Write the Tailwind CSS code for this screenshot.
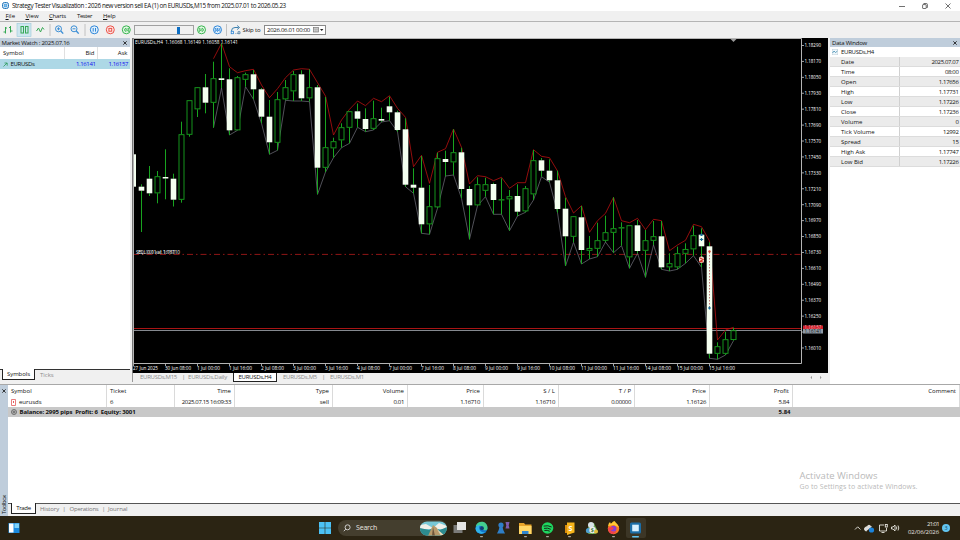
<!DOCTYPE html>
<html lang="en">
<head>
    <meta charset="UTF-8">
    <meta name="viewport" content="width=device-width, initial-scale=1.0">
    <title>Strategy Tester Visualization</title>
    <script src="https://cdn.jsdelivr.net/npm/@tailwindcss/browser@4"></script>
</head>
<body class="w-[960px] h-[540px] overflow-hidden flex flex-col bg-[#f0f0f0] font-['Open_Sans','Noto_Sans',sans-serif] text-[6px] leading-[10px] text-[#111] whitespace-nowrap">

    <!-- Title bar -->
    <header class="h-[11px] shrink-0 bg-white flex items-center pl-[2px]">
        <svg class="size-[7px] mr-[3px]" viewBox="0 0 14 14"><rect x="1" y="1" width="12" height="12" rx="4" fill="#fff" stroke="#1f74b8" stroke-width="2"/><rect x="4" y="4" width="6" height="6" fill="#7ec3f5" stroke="#2c80c4"/></svg>
        <span class="text-[6.3px]" data-size="6.3" data-w="274">Strategy Tester Visualization : 2026 new version sell EA (1) on EURUSDs,M15 from 2025.07.01 to 2026.05.23</span>
        <div class="ml-auto flex items-center gap-[17px] pr-[9px] text-[#333]">
            <svg class="size-[6px]" viewBox="0 0 6 6"><path d="M0 3.5h6" stroke="currentColor" stroke-width=".7"/></svg>
            <svg class="size-[6px]" viewBox="0 0 6 6" fill="none" stroke="currentColor" stroke-width=".7"><rect x=".6" y="1.6" width="3.6" height="3.9" rx=".5"/><path d="M1.8 1.4V.5h2.6q1 0 1 1v3H4.5"/></svg>
            <svg class="size-[6px]" viewBox="0 0 6 6"><path d="M.5.5l5 5m0-5l-5 5" stroke="currentColor" stroke-width=".7"/></svg>
        </div>
    </header>

    <!-- Menu -->
    <nav class="h-[11px] shrink-0 border-b border-[#b4b4b4] flex items-center">
        <span class="w-[20px] ml-[5.5px]"><u>F</u>ile</span>
        <span class="w-[23.5px]"><u>V</u>iew</span>
        <span class="w-[28px]" data-w="17"><u>C</u>harts</span>
        <span class="w-[26px]" data-w="15">Tester</span>
        <span data-w="12.5"><u>H</u>elp</span>
    </nav>

    <!-- Toolbar -->
    <div class="h-[16px] shrink-0 flex items-center">
        <svg class="w-[134px] h-[16px]" viewBox="0 22 134 16" fill="none" stroke-width="1">
            <g stroke="#35a853"><path d="M5.500 27v6.500M3.500 32h2M5.500 28h1.500M10.500 26v6.500M9 27.500h1.500M10.500 31h2"/></g>
            <rect x="17" y="23.500" width="14" height="13" fill="#cde6ee" stroke="#9cc9da" stroke-width=".6"/>
            <g stroke="#35a853"><rect x="21" y="26.500" width="2.500" height="6.500"/><rect x="25.500" y="26.500" width="2.500" height="6.500"/><path d="M36.500 31l2-3 2 4 2-4.500 1.500 2"/></g>
            <path d="M50 24v12M85 24v12" stroke="#b5b5b5" stroke-width=".8"/>
            <g stroke="#3b8fd6"><circle cx="58.500" cy="28.800" r="3"/><path d="M57 28.800h3M58.500 27.300v3"/><path d="M60.800 31l2.400 2.600" stroke-width="1.400"/><circle cx="74" cy="28.800" r="3"/><path d="M72.500 28.800h3"/><path d="M76.300 31l2.400 2.600" stroke-width="1.400"/></g>
            <g stroke="#2f86d8"><circle cx="94.300" cy="29.800" r="4" fill="#e0f0fc"/><path d="M93.200 28v3.600M95.500 28v3.600"/></g>
            <g stroke="#ec5248"><circle cx="110.300" cy="29.800" r="4" fill="#fde7e5"/><rect x="108.900" y="28.400" width="2.800" height="2.800"/></g>
            <g stroke="#38b54f"><circle cx="126.300" cy="29.800" r="4" fill="#e2f7e4"/><path d="M126 28l-2 1.800 2 1.800zM128.600 28l-2 1.800 2 1.800z" stroke-width=".8"/></g>
        </svg>
        <div class="w-[60px] h-[10px] border border-[#a0a0a0] pl-[42px] flex items-center"><span class="w-[3px] h-[7px] bg-[#0c6ec4]"></span></div>
        <svg class="w-[47px] h-[16px]" viewBox="194 22 47 16" fill="none">
            <g stroke="#38b54f"><circle cx="201.500" cy="29.800" r="4" fill="#e2f7e4"/><path d="M199.300 28l2 1.800-2 1.800zM202 28l2 1.800-2 1.800z" stroke-width=".8"/></g>
            <g stroke="#2f86d8"><circle cx="217.500" cy="29.800" r="4" fill="#e0f0fc"/><path d="M215.300 28l1.800 1.800-1.800 1.800zM217.400 28l1.800 1.800-1.800 1.800zM219.800 28v3.600" stroke-width=".8"/></g>
            <path d="M226.500 24v12" stroke="#b5b5b5" stroke-width=".8"/>
            <path d="M231.500 31q0-3.500 3.500-3.500h3.500M237.200 25.500l2.300 2-2.300 2" stroke="#3b7fae"/><rect x="231.200" y="31.300" width="2.400" height="2.400" stroke="#2f86d8" stroke-width=".8"/><path d="M235.500 33.500h.8M237.300 33.500h.8M238 31.700h2v2h-2z" stroke="#4a78a0" stroke-width=".8"/>
        </svg>
        <span class="ml-[1.500px] w-[21.500px]"><span data-w="18">Skip to</span></span>
        <div class="w-[62px] h-[10px] bg-white border border-[#8a8a8a] flex items-center pl-[2px]">
            <span data-w="43">2026.06.01 00:00</span>
            <svg class="w-[11px] h-[6px] ml-[3px]" viewBox="0 0 11 6"><rect x=".5" y=".5" width="5" height="4.500" fill="#ddd" stroke="#777" stroke-width=".7"/><path d="M.5 2h5M2.200 2v3M4 2v3" stroke="#888" stroke-width=".5"/><path d="M7 2l1.700 2 1.700-2z" fill="#222"/></svg>
        </div>
    </div>

    <!-- Panels -->
    <main class="h-[346px] shrink-0 flex gap-[2px]">
        <section class="w-[130px] flex flex-col">
            <div class="h-[9px] bg-[#bfcddb] flex items-center justify-between pl-[1.500px] pr-[3px]">
                <span data-w="68">Market Watch : 2025.07.16</span>
                <svg class="size-[4px]" viewBox="0 0 4 4"><path d="M.3.3l3.400 3.400m0-3.400L.3 3.700" stroke="#111" stroke-width=".8"/></svg>
            </div>
            <div class="h-[12px] bg-white flex items-stretch leading-[12px]">
                <span class="w-[65px] pl-[3px] border-r border-[#e0e0e0]">Symbol</span>
                <span class="w-[33px] pr-[2.500px] text-right border-r border-[#e0e0e0]">Bid</span>
                <span class="flex-1 pr-[2.500px] text-right">Ask</span>
            </div>
            <div class="h-[10px] bg-[#add8e6] flex items-center">
                <svg class="size-[5px] ml-[3px] mr-[2.500px]" viewBox="0 0 5 5"><path d="M.5 4.500l3.500-3.500M1.500 1h2.700v2.700" fill="none" stroke="#2b9a5a" stroke-width=".8"/></svg>
                <span class="w-[54px]"><span data-w="24">EURUSDs</span></span>
                <span class="w-[31px] text-right text-[#1010f0]"><span data-w="19.5">1.16141</span></span>
                <span class="w-[32.500px] text-right text-[#1010f0]"><span data-w="19.5">1.16157</span></span>
            </div>
            <div class="flex-1 bg-white border-b border-[#333]"></div>
            <div class="h-[14px] flex items-start pl-[2px] text-[#8a8a8a]">
                <span class="-mt-[1px] w-[33px] h-[11px] leading-[11px] bg-white border border-t-0 border-[#222] text-center text-[#111]"><span data-w="23">Symbols</span></span>
                <span class="pl-[5px]">Ticks</span>
            </div>
        </section>

        <section class="w-[696px] flex flex-col">
            <svg id="chart" class="block h-[335px] w-[696px] bg-black font-['Open_Sans',sans-serif]" viewBox="132 38 696 335"></svg>
            <div class="flex-1 flex items-start text-[#8c8c8c]">
                <div class="h-[9px] flex w-[101px] pl-[7px] border-l border-[#999] leading-[9px]">
                    <span class="w-[42px]"><span data-w="37">EURUSDs,M15</span></span><span class="w-[6px] text-[#777]">|</span><span data-w="39">EURUSDs,Daily</span>
                </div>
                <span class="w-[44px] h-[9px] leading-[8px] bg-white border border-t-0 border-[#222] text-center text-[#111]"><span data-w="33">EURUSDs,H4</span></span>
                <div class="flex leading-[9px] pl-[6px]">
                    <span class="w-[39px]"><span data-w="34">EURUSDs,M5</span></span><span class="w-[8px] text-[#777]">|</span><span data-w="34">EURUSDs,M1</span>
                </div>
                <svg class="ml-auto mr-[5px] mt-[2px] w-[14px] h-[5px]" viewBox="0 0 14 5"><path d="M3 .8L1.500 2.500 3 4.200zM11 .8l1.500 1.700L11 4.200z" fill="#999"/></svg>
            </div>
        </section>

        <section class="w-[130px] bg-white">
            <div class="h-[9px] bg-[#bfcddb] flex items-center justify-between pl-[2px] pr-[3px]">
                <span data-w="35">Data Window</span>
                <svg class="size-[4px]" viewBox="0 0 4 4"><path d="M.3.3l3.400 3.400m0-3.400L.3 3.700" stroke="#111" stroke-width=".8"/></svg>
            </div>
            <div class="h-[10px] flex items-center pl-[2px] gap-[3px]">
                <svg class="size-[6px]" viewBox="0 0 6 6"><rect x=".2" y=".2" width="5.600" height="5.600" fill="#eef6fb" stroke="#b5c7d3" stroke-width=".4"/><path d="M.5 4l1.500-2 1.500 1.500L5.500 2" fill="none" stroke="#2d7ea8" stroke-width=".7"/></svg>
                <span data-w="33">EURUSDs,H4</span>
            </div>
            <div id="data-rows"></div>
        </section>
    </main>

    <!-- Toolbox -->
    <section class="h-[132px] shrink-0 flex border-t border-[#a8a8a8]">
        <div class="w-[8px] bg-[#bfcddb] flex flex-col items-center justify-between pt-[4px] pb-[2px]">
            <svg class="size-[4px]" viewBox="0 0 4 4"><path d="M.3.3l3.400 3.400m0-3.400L.3 3.700" stroke="#111" stroke-width=".8"/></svg>
            <span class="[writing-mode:vertical-rl] rotate-180 leading-[8px]" data-w="19">Toolbox</span>
        </div>
        <div class="flex-1 flex flex-col bg-white">
            <div id="trades"></div>
            <div class="h-[10px] bg-[#c8c8c8] flex items-center font-bold pl-[3px]">
                <svg class="size-[6px] mr-[2.500px]" viewBox="0 0 6 6" fill="none" stroke="#333" stroke-width=".6"><circle cx="3" cy="3" r="2.500"/><path d="M1.500 3h3M3 1.500v3"/></svg>
                <span class="w-[759px]"><span data-w="116" data-weight="700" class="whitespace-pre">Balance: 2995 pips  Profit: 6  Equity: 3001</span></span>
                <span data-w="12" data-weight="700">5.84</span>
            </div>
            <div class="flex-1 flex flex-col items-end justify-end pb-[11px] text-[#b9b9b9]">
                <div class="w-[160.500px]">
                    <p class="text-[9.500px] leading-[12px]"><span data-size="9.5" data-w="78">Activate Windows</span></p>
                    <p class="text-[7px] leading-[10px]"><span data-size="7" data-w="118">Go to Settings to activate Windows.</span></p>
                </div>
            </div>
            <div class="h-[13px] bg-[#f0f0f0] border-t border-[#555] flex items-start pl-[3px] text-[#777] leading-[10px]">
                <span class="-mt-[1px] w-[25px] h-[11px] bg-white border border-t-0 border-[#222] text-center text-[#111]"><span data-w="14.5">Trade</span></span>
                <span class="pl-[4px] w-[26.500px]"><span data-w="19">History</span></span><span class="w-[7px]">|</span>
                <span class="w-[32.500px]"><span data-w="29">Operations</span></span><span class="w-[6px]">|</span>
                <span data-w="19.5">Journal</span>
            </div>
        </div>
    </section>

    <!-- Taskbar -->
    <footer class="h-[24px] shrink-0 bg-[#2b2413] flex items-center text-[#e8e6e0]">
        <svg class="w-[12px] h-[12px] ml-[8px]" viewBox="0 0 12 12"><rect x=".5" y="1" width="11" height="10" fill="#1a8be0"/><rect x="1" y="1.500" width="4.500" height="9" fill="#fff"/><rect x="6.500" y="1.500" width="4.500" height="4.500" fill="#7ed3fb"/></svg>
        <svg class="w-[12px] h-[12px] ml-[299px]" viewBox="0 0 12 12" fill="#4cc2f5"><path d="M0 0h5.700v5.700H0zM6.300 0H12v5.700H6.300zM0 6.300h5.700V12H0zM6.300 6.300H12V12H6.300z"/></svg>
        <div class="ml-[7px] w-[109px] h-[16px] rounded-full bg-[#443e2e] flex items-center overflow-hidden">
            <svg class="size-[8px] ml-[5px] mr-[5px]" viewBox="0 0 8 8" fill="none" stroke="#ddd" stroke-width=".9"><circle cx="4.600" cy="3.300" r="2.500"/><path d="M2.800 5.100L.8 7.200"/></svg>
            <span class="text-[7px]" data-size="7" data-w="21">Search</span>
            <svg class="w-[27px] h-[15px] ml-auto" viewBox="0 0 27 15"><defs><clipPath id="hl"><rect y=".5" width="27" height="14" rx="7"/></clipPath></defs><g clip-path="url(#hl)"><path fill="#78c8d6" d="M0 0h27v15H0z"/><path d="M0 4l6-1 7 4 6-5 8 3v3H0z" fill="#f0f0ea"/><path d="M0 7l9 2 4-2 7 2 7-3v9H0z" fill="#2d8b8f"/><path d="M13 4l-5 11h13l-4-8z" fill="#b99a6a"/><path d="M13 6l-1 9h3z" fill="#6d563c"/><path d="M17 8l4 7h4z" fill="#e9d9b5"/></g></svg>
        </div>
        <svg class="w-[200px] h-[24px] ml-[6px]" viewBox="453 516 200 24">
            <rect x="453.500" y="525" width="9" height="8" fill="#7b7b78"/><rect x="457" y="522" width="9" height="8" fill="#e5e5e3"/>
            <circle cx="481.500" cy="528" r="6" fill="#1473c8"/><path d="M475.800 526a6 6 0 0 1 11.700 2.500c0 2-3.500 2.500-4.500 1 1-2-1-4-3-3.500s-3 1.500-4.200 0z" fill="#43cf8f"/><path d="M475.500 528.500q1-4 5-3.500-3 2 0 6 2 2 5 1-4 3-8 .5-2-1.500-2-4z" fill="#2fb2ea"/><circle cx="482" cy="528.200" r="1.900" fill="#123f73"/>
            <g fill="#2f7fc8"><circle cx="501" cy="525" r="2.600"/><path d="M499.700 526h2.600l1 4 1.700 3.500h-8l1.700-3.500z"/></g><path d="M505.500 522h4l-.8 3.500.8 3h-4l.8-3z" fill="#7d5cae"/>
            <path d="M519 523h5l1.200 1.500h6.300V534H519z" fill="#e7a52a"/><path d="M519 526h12.500v8H519z" fill="#ffd766"/><path d="M522 531h6.500v3H522z" fill="#2f86d0"/>
            <circle cx="547.500" cy="528" r="5.800" fill="#1ed760"/><path d="M544 526q4-1 7.300.8M544.400 528.300q3.300-.8 6 .8M544.800 530.400q2.500-.6 4.600.6" fill="none" stroke="#152a17" stroke-width="1" stroke-linecap="round"/>
            <path d="M565 525h2v8h-2zM567 522.500h7.500v10L567 535z" fill="#f6b51c"/><path d="M565 525h2v8h-2z" fill="#d98c0c"/><text x="568.500" y="531" font-size="7" font-weight="700" fill="#fff">S</text>
            <path d="M586 532l4-8 4-1 4 9-3 2h-6z" fill="#6bab55"/><circle cx="591" cy="525" r="3" fill="#d9e4e8"/><circle cx="588.500" cy="530.500" r="2.600" fill="#4d9fcf"/><circle cx="592.500" cy="530" r="3.200" fill="#eee"/><circle cx="596" cy="531.500" r="2" fill="#e1bd3a"/><text x="590.800" y="532.200" font-size="5.500" font-weight="700" fill="#3d7f3d">$</text>
            <circle cx="613.500" cy="528.500" r="5.700" fill="#ff7a1f"/><path d="M608 526q.5-3 2-4l1 2q2-3 3.500-3 3 3 4.500 6.500l-5-2.500z" fill="#ffc933"/><circle cx="613.500" cy="528.700" r="3" fill="#8a3fd1"/><path d="M608 528q3-2 6 0-2 3-4 2 3 3 7 1-2 3.500-5 3-4-1-4-6z" fill="#f0414f"/>
            <rect x="626" y="518" width="20" height="20" rx="2" fill="#3c3626"/><rect x="630" y="522.500" width="11" height="11" rx="1.500" fill="#1b6ea8"/><rect x="632.200" y="524.700" width="6.600" height="6.600" fill="#d8f0ff"/><rect x="632" y="536" width="7" height="1.500" rx=".7" fill="#5cc3f2"/>
            <g fill="#aaa69c"><rect x="480" y="536" width="3" height="1.200" rx=".6"/><rect x="524" y="536" width="3" height="1.200" rx=".6"/><rect x="546" y="536" width="3" height="1.200" rx=".6"/><rect x="568" y="536" width="3" height="1.200" rx=".6"/><rect x="612" y="536" width="3" height="1.200" rx=".6"/></g>
        </svg>
        <svg class="w-[48px] h-[12px] ml-auto" viewBox="854 522 48 12" fill="none" stroke="#e8e6e0" stroke-width=".9">
            <path d="M855 529.500l2.700-2.700 2.700 2.700"/><path d="M866.500 531a2 2 0 0 1 0-4q2.500-3.500 5 0" fill="#ddd"/><circle cx="871.500" cy="530" r="2.600" fill="#1b83dc" stroke="none"/>
            <path d="M884 525h-4.500v6h7v-3M881.500 532.500h3"/><rect x="885.300" y="524.500" width="2" height="2.500"/><path d="M891.500 527h1.500l2-2v6l-2-2h-1.500zM896.300 526.500q1 1.500 0 3M898 525.500q1.600 2.500 0 5"/>
        </svg>
        <div class="w-[37px] text-right text-[6px] leading-[8px]"><p><span data-w="12">21:01</span></p><p><span data-w="31">02/06/2026</span></p></div>
        <span class="ml-[3px] mr-[10px] size-[8px] rounded-full bg-[#62c5f0] text-[#10425e] text-[5.500px] leading-[8px] text-center">3</span>
    </footer>

    <script>
        // x, high, body top, body bottom, low, type (1 = bear, 0 = bull)
        const candles = [
            [133.5,154.3,154.3,186.7,186.7,1],[141,184.3,186.7,190.7,232,1],[149,166,178.7,193.3,196,1],[157,171,176.3,193.3,203.3,0],
            [165,149.3,177,178.5,199.3,1],[173,173.7,178.7,199.7,206.5,1],[181,121.7,134.3,199.7,202.7,0],[189,100.3,100.3,134.7,136.7,0],
            [197,87,87.3,109.3,117,0],[205,74,87.3,102.7,113.3,1],[213,61.7,78.3,102.7,127.7,0],[221,43.3,78.3,80,88,1],
            [229,68.3,79.3,130.3,135,1],[237,76,77.3,130.3,130.3,0],[245,72.7,74.3,79.7,86.7,0],[253,70,74.3,89.3,99.3,1],
            [261,88,89.3,116.7,123.3,1],[269,100,116.7,142.3,154.3,1],[277,92,99.3,142.7,150.3,0],[285,80,87.3,99.3,100.3,0],
            [293,71,74.3,91.3,101,0],[301,70.3,74.3,98.3,101,1],[309,69.3,87.3,98.3,101.7,0],[317,85,87.3,167.7,194.3,1],
            [325,97,147.3,167.7,172,0],[333,137.7,141.3,148.3,157.7,0],[341,123.3,127.3,140.3,147.7,0],[349,111,111.3,127.7,143.3,0],
            [357,103.5,111.3,118.7,127.3,1],[365,108.3,119,129,131.7,1],[373,100.7,118.3,128.7,130,0],[381,107.7,119,120.7,122,1],
            [389,96.7,106.3,112.3,120.7,1],[397,110.7,112.3,130,131.7,1],[405,118.3,129.3,184.7,186.7,1],[413,168.3,184.7,187.7,193.3,1],
            [421,156,187.7,224.3,233.3,1],[429,185,206.3,224.3,234.3,0],[437,152.7,158.3,207.3,208.3,0],[445,150.7,159,162,176,1],
            [453,129.3,152.3,162.3,175,0],[461,147.7,152.3,189,198.3,1],[469,186,189,205.3,239.3,1],[477,177.3,184.3,205.3,205.7,0],
            [485,177.7,184.3,190.7,196.7,0],[493,182.7,184,200,214.3,1],[501,178.3,199.3,200.3,214.3,0],[509,190,196.3,199.3,230.7,0],
            [517,184.3,196,211.7,216,1],[525,186,188.3,211.3,212.3,0],[533,150,160.3,194.3,200,0],[541,158,160.3,170.7,176.7,1],
            [549,159.3,170.7,180.3,182.3,1],[557,170.7,180.3,209,212.7,1],[565,197.7,208.7,236.3,266,1],[573,216,216.3,236.7,242.3,0],
            [581,206,217.3,250,264,1],[589,236,248,250.7,259,0],[597,222.7,240.3,248.7,256.7,0],[605,215.7,232.3,240.7,242,0],
            [613,197.3,228.3,232.7,252.7,0],[621,222.3,227.3,228.3,245.7,0],[629,225.3,225.3,257.3,268.3,0],[637,220,225.3,251,253.3,1],
            [645,230,240.3,250.7,277.3,0],[653,221,236.3,240.7,245,0],[661,221,236.3,267.3,269.3,1],[669,253.3,263.3,267.3,271,0],
            [677,246.7,253.3,267.3,269.3,0],[685,243.3,249,253.7,263.3,0],[693,225.7,235.3,249.3,255.7,0],[701,228.3,234.7,246.3,267.3,1],
            [709,242.3,246.3,353.7,358.3,1],[717,342.3,346.3,353.7,359.3,0],[725,331.7,339.3,353.7,355,0],[733,327.7,330.3,340,340.7,0]
        ];
        // upper band, one value per bar from x = 213
        const upper = [58.7,43.3,66.7,72.7,70.7,69.3,85,97.7,88.7,77.7,70,68.7,69.3,82.7,96,135,120,109.3,101,105.7,98.3,101.7,95.7,108.3,117.3,166.7,155.3,183.3,152.3,148.7,129,147.3,184,175.7,176.7,180.7,177.3,188.3,182.7,182.7,149.7,156.3,157.7,171,196.7,213,205.7,232.3,220.7,213.3,197.3,220.7,222.7,218.3,229.7,219.3,220.7,250.7,245,240.3,224.3,226.7,241,340,330,327.3];
        const times = ['27 Jun 2025','30 Jun 08:00','1 Jul 00:00','1 Jul 16:00','2 Jul 08:00','3 Jul 00:00','3 Jul 16:00','4 Jul 08:00','7 Jul 00:00','7 Jul 16:00','8 Jul 08:00','9 Jul 00:00','9 Jul 16:00','10 Jul 08:00','11 Jul 00:00','11 Jul 16:00','14 Jul 08:00','15 Jul 00:00','15 Jul 16:00'];

        let s = '';
        const text = (x, y, t, w, fill = '#fff') => `<text x="${x}" y="${y}" font-size="4.800" fill="${fill}" textLength="${w}" lengthAdjust="spacingAndGlyphs">${t}</text>`;

        // order and price lines
        s += '<path d="M133 254.400H801" stroke="#a01818" stroke-width=".9" stroke-dasharray="6 3 1.500 3"/>';
        s += '<path d="M133 328.500H801" stroke="#a81414"/><path d="M133 330.500H801" stroke="#85898f"/>';

        // bands
        const lows = candles.filter(c => c[0] >= 213);
        s += `<polyline fill="none" stroke="#74747f" stroke-width=".7" points="${lows.map(c => c[0] + .5 + ',' + c[4]).join(' ')}"/>`;
        s += `<polyline fill="none" stroke="#b81010" stroke-width=".8" points="${upper.map((y, i) => (213.5 + i * 8) + ',' + y).join(' ')}"/>`;

        for (const [x, h, t, b, l, bear] of candles) {
            const c = x + .5;
            s += `<path d="M${c} ${h}V${t}M${c} ${b}V${l}" stroke="#18a41f"/>`;
            if (x < 134) { s += `<rect x="133" y="${t}" width="3" height="${b - t}" fill="#f4fff0"/>`; continue; }
            s += bear
                ? `<rect x="${c - 2.8}" y="${t}" width="5.600" height="${Math.max(b - t, 1)}" fill="#f4fff0"/>`
                : `<rect x="${c - 2.5}" y="${t + .4}" width="5" height="${Math.max(b - t - .8, .3)}" fill="#000" stroke="#18a41f" stroke-width=".9"/>`;
        }

        // trade markers
        s += '<path d="M709.500 252v56" stroke="#b66" stroke-width=".9" stroke-dasharray="1.500 1.500"/>';
        s += '<circle cx="709.500" cy="251.500" r="1.200" fill="#d8432f"/><path d="M708 308h3M709.500 306.500v3M699.800 234.800h3.400M701.500 233.500v2.500M699.800 239.500h3.400M701.500 238v3" stroke="#1c6c9a" stroke-width="1.200"/>';
        s += '<rect x="699" y="256.500" width="5" height="6.500" rx="2" fill="#f2d2c8"/><path d="M700 258l3 1.500-3 2 3 .5" stroke="#d8301f" stroke-width="1.200" fill="none"/>';

        // frame and axes
        s += '<path d="M133.500 363.500V38.500H801.500V363.500H133" fill="none" stroke="#b4b4b4"/><path d="M132.500 38v335" stroke="#777"/>';
        s += '<path d="M730.500 39h6l-3 3z" fill="#999"/>';
        for (let i = 0; i < 20; i++) {
            const y = 45.5 + i * 15.92;
            s += `<path d="M802 ${y}h2" stroke="#ccc" stroke-width=".8"/>`;
            if (i !== 18) s += text(804.5, y + 1.8, (1.1829 - i * .0012).toFixed(5), 16.5);
        }
        s += '<rect x="803" y="325.500" width="20" height="4" fill="#d01f2c"/><rect x="803" y="329" width="20" height="4.500" fill="#8f9aa5"/>' + text(804.5, 329.2, '1.16157', 17, '#f3b0b0') + text(804.5, 333, '1.16141', 17, '#111');
        times.forEach((t, i) => {
            const x = 133 + i * 32;
            s += `<path d="M${x + .5} 364v2" stroke="#ccc" stroke-width=".8"/>` + text(x, 369.8, t, t.length > 11 ? 26 : i ? 23 : 25);
        });
        s += text(135, 43.5, 'EURUSDs,H4&#160; 1.16068 1.16149 1.16058 1.16141', 103);
        s += text(136, 253.5, 'SELL 0.01 at 1.16710', 44) + text(138, 253.5, 'EQ: 0.01 at 1.16710', 37, '#ccc');
        document.getElementById('chart').innerHTML = s;

        const rows = [['Date','2025.07.07'],['Time','08:00'],['Open','1.17656'],['High','1.17731'],['Low','1.17226'],['Close','1.17236'],['Volume','0'],['Tick Volume','12992'],['Spread','15'],['High Ask','1.17747'],['Low Bid','1.17226']];
        document.getElementById('data-rows').innerHTML = rows.map(([k, v], i) => `
            <div class="h-[10px] flex leading-[10px] border-b border-[#dcdcdc] ${i % 2 ? 'bg-white' : 'bg-[#ebebeb]'}">
                <span class="w-[70px] pl-[11px] border-r border-[#d0d0d0]">${k}</span>
                <span class="flex-1 pr-[1.500px] text-right tracking-[-0.35px]">${v}</span>
            </div>`).join('');

        // column title, value, width
        const cols = [['Symbol','eurusds',99],['Ticket','6',68],['Time','2025.07.15 16:09:33',60],['Type','sell',98],['Volume','0.01',75],['Price','1.16710',76],['S / L','1.16710',75],['T / P','0.00000',76],['Price','1.16126',75],['Profit','5.84',83],['Comment','',167]];
        const icon = '<svg class="w-[5px] h-[7px] mr-[3px]" viewBox="0 0 5 7"><rect x=".4" y=".4" width="4.200" height="6.200" rx=".6" fill="#fff" stroke="#d33" stroke-width=".7"/><path d="M2.500 2v2" stroke="#d33" stroke-width=".8"/></svg>';
        const line = (j, h) => `<div class="flex ${h}">` + cols.map((c, i) => `
            <span class="flex items-center border-r border-[#dadada] px-[3px] ${i < 2 ? 'justify-start' : 'justify-end'} ${j && i > 1 && i !== 3 ? 'tracking-[-0.35px]' : ''}" style="width:${c[2]}px">${i === 0 && j ? icon : ''}${c[j]}</span>`).join('') + '</div>';
        document.getElementById('trades').innerHTML = line(0, 'h-[12px]') + line(1, 'h-[10px]');

        // spread each label to its target width
        const ctx = document.createElement('canvas').getContext('2d');
        document.querySelectorAll('[data-w]').forEach(el => {
            ctx.font = `${el.dataset.weight || 400} 60px "Open Sans"`;
            const w = ctx.measureText(el.textContent).width * (el.dataset.size || 6) / 60;
            el.style.letterSpacing = (el.dataset.w - w) / el.textContent.length + 'px';
        });
    </script>
</body>
</html>
